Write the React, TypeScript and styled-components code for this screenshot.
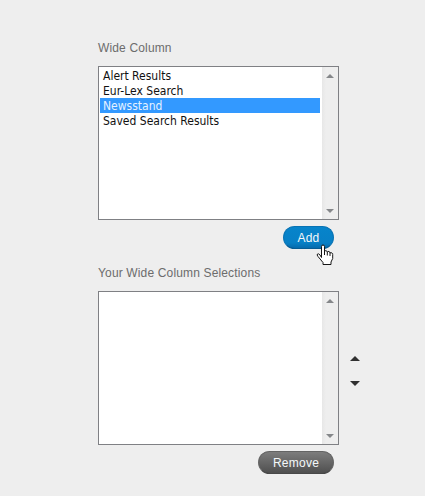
import React from "react";
import styled, { createGlobalStyle } from "styled-components";

const GlobalStyle = createGlobalStyle`
  html, body { margin: 0; background: #eeeeee; }
  * { box-sizing: border-box; }
`;

const Page = styled.main`
  width: 425px;
  height: 496px;
  overflow: hidden;
  padding: 40px 0 0 98px;
  background: #eeeeee;
  font-family: "Liberation Sans", Arial, sans-serif;
  font-size: 12px;
`;

const Section = styled.section`
  height: 225px;
  display: flex;
  flex-direction: column;
`;

const Label = styled.label`
  height: 26px;
  line-height: 16px;
  color: #6c6c6c;
  letter-spacing: 0.15px;
`;

const ListRow = styled.div`
  display: flex;
  align-items: center;
  gap: 11px;
`;

const ListBox = styled.div`
  width: 241px;
  height: 154px;
  flex: none;
  display: flex;
  border: 1px solid #7f8084;
  background: #fff;
`;

const Options = styled.ul`
  flex: 1;
  margin: 0;
  padding: 1px 2px 1px 1px;
  list-style: none;
`;

const Option = styled.li<{ $selected?: boolean }>`
  height: 15px;
  padding: 1px 0 0 3px;
  line-height: 15px;
  font-family: "DejaVu Sans Condensed", "DejaVu Sans", sans-serif;
  font-stretch: condensed;
  font-size: 12px;
  white-space: nowrap;
  color: ${(p) => (p.$selected ? "#e4f2ff" : "#111")};
  background: ${(p) => (p.$selected ? "#3399ff" : "transparent")};
`;

const Scrollbar = styled.div`
  width: 16px;
  padding: 7px 0 6px;
  display: flex;
  flex-direction: column;
  align-items: center;
  justify-content: space-between;
  background: linear-gradient(90deg, #e7e7e7, #eeeeee 4px);
`;

const Actions = styled.div`
  width: 236px;
  padding-top: 6px;
  display: flex;
  justify-content: flex-end;
`;

const PillButton = styled.button<{ $tone: "blue" | "gray" }>`
  position: relative;
  width: ${(p) => (p.$tone === "blue" ? 51 : 76)}px;
  height: 23px;
  padding: 1px 0 0;
  border: 1px solid ${(p) => (p.$tone === "blue" ? "#0873b4" : "#646464")};
  border-bottom-color: ${(p) => (p.$tone === "blue" ? "#075c94" : "#484848")};
  border-radius: 12px;
  background: ${(p) =>
    p.$tone === "blue"
      ? "linear-gradient(#0784cb, #0880c6 75%, #066bad)"
      : "linear-gradient(#7d7d7d, #4f4f4f)"};
  color: #f4f8fa;
  font-family: inherit;
  font-size: 12px;
  line-height: 20px;
  letter-spacing: 0.25px;
`;

const Cursor = styled.svg`
  position: absolute;
  left: 32px;
  top: 17px;
`;

const Reorder = styled.div`
  display: flex;
  flex-direction: column;
  gap: 20px;
  padding-top: 5px;
`;

const Arrow = ({ down = false, small = false }: { down?: boolean; small?: boolean }) => {
  const w = small ? 8 : 10;
  const h = small ? 4 : 5;
  return (
    <svg width={w} height={h} style={{ display: "block" }}>
      <path
        d={down ? `M0 0H${w}L${w / 2} ${h}Z` : `M0 ${h}H${w}L${w / 2} 0Z`}
        fill={small ? "#85878a" : "#303030"}
      />
    </svg>
  );
};

const HandCursor = () => (
  <Cursor width="18" height="22" viewBox="0 0 18 22">
    <path
      d="M5.5 13.5V2.5Q5.5 1 7 1T8.5 2.5V7.5Q9 6.5 10 6.7T11.3 8Q12 7.2 13 7.5T14 9Q15 8.4 16 9T16.7 10.5V14.5L15 18V20.5H7V18.5L2 12.5Q.5 10.8 1.5 10T4 11Z"
      fill="#fff"
      stroke="#151515"
      strokeLinejoin="round"
    />
    <path d="M8.5 7V11M11.3 8V11.5M14 9V12" fill="none" stroke="#151515" />
  </Cursor>
);

const List = ({ items, selected }: { items: string[]; selected?: string }) => (
  <ListBox>
    <Options>
      {items.map((item) => (
        <Option key={item} $selected={item === selected}>
          {item}
        </Option>
      ))}
    </Options>
    <Scrollbar>
      <Arrow small />
      <Arrow small down />
    </Scrollbar>
  </ListBox>
);

export default function App() {
  return (
    <Page>
      <GlobalStyle />
      <Section>
        <Label>Wide Column</Label>
        <List
          items={["Alert Results", "Eur-Lex Search", "Newsstand", "Saved Search Results"]}
          selected="Newsstand"
        />
        <Actions>
          <PillButton $tone="blue">
            Add
            <HandCursor />
          </PillButton>
        </Actions>
      </Section>
      <Section>
        <Label>Your Wide Column Selections</Label>
        <ListRow>
          <List items={[]} />
          <Reorder>
            <Arrow />
            <Arrow down />
          </Reorder>
        </ListRow>
        <Actions>
          <PillButton $tone="gray">Remove</PillButton>
        </Actions>
      </Section>
    </Page>
  );
}
